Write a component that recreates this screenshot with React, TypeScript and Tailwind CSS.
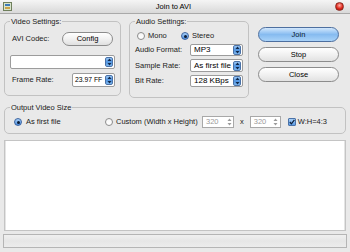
import React from "react";

function Stepper({ blue = true }: { blue?: boolean }) {
  return (
    <div
      className={
        blue
          ? "w-[8px] h-[10px] shrink-0 rounded-[2px] bg-gradient-to-b from-[#9cc8f4] via-[#4f93e0] to-[#7db6ee] border border-[#4a72a8] flex items-center justify-center"
          : "w-[8px] h-[10px] shrink-0 flex items-center justify-center"
      }
    >
      <svg width="5" height="8" viewBox="0 0 5 8">
        <path d="M2.5 0.5 L4.5 3 L0.5 3 Z" fill={blue ? "#10284a" : "#9a9a9a"} />
        <path d="M2.5 7.5 L4.5 5 L0.5 5 Z" fill={blue ? "#10284a" : "#9a9a9a"} />
      </svg>
    </div>
  );
}

function Select({ text, className, textClass = "text-[8px] pl-[3px]" }: { text: string; className: string; textClass?: string }) {
  return (
    <div className={"flex items-center bg-white border border-[#9c9c9c] rounded-[2px] pr-[1px] " + className}>
      <span className={"flex-1 overflow-hidden whitespace-nowrap leading-[10px] text-black " + textClass}>{text}</span>
      <Stepper />
    </div>
  );
}

function Radio({ on }: { on?: boolean }) {
  return on ? (
    <div className="w-[8px] h-[8px] rounded-full border border-[#3c64a0] bg-gradient-to-b from-[#a8d0f8] to-[#4c8fe0] flex items-center justify-center">
      <div className="w-[3px] h-[3px] rounded-full bg-[#0c1c34]" />
    </div>
  ) : (
    <div className="w-[8px] h-[8px] rounded-full border border-[#8c8c8c] bg-gradient-to-b from-[#f6f6f6] to-white" />
  );
}

function Btn({ label, primary }: { label: string; primary?: boolean }) {
  return (
    <div
      className={
        primary
          ? "h-[15px] rounded-full border border-[#4d6f9f] bg-gradient-to-b from-[#d2e7fc] via-[#86bbf0] to-[#a9d2f8] flex items-center justify-center text-[7.5px] text-[#0a1a30]"
          : "h-[15px] rounded-full border border-[#8c8c8c] bg-gradient-to-b from-white via-[#f1f1f1] to-[#e2e2e2] flex items-center justify-center text-[7.5px] text-black"
      }
    >
      {label}
    </div>
  );
}

export default function App() {
  return (
    <div className="w-[350px] h-[252px] overflow-hidden bg-[#e9e9e9] font-['Liberation_Sans',Arial,sans-serif] text-[7.5px] text-[#1a1a1a] flex flex-col">
      {/* title bar */}
      <div className="h-[14px] shrink-0 flex items-center px-[3px] bg-gradient-to-b from-[#f5f5f5] to-[#d9d9d9] border-b border-[#a9a9a9]">
        <svg width="9" height="9" viewBox="0 0 9 9">
          <rect x="0.5" y="0.5" width="8" height="8" fill="#d8e4cc" stroke="#6f7f5c" />
          <rect x="2" y="2" width="5" height="2" fill="#3d7ab8" />
          <rect x="2" y="5" width="5" height="2" fill="#c9a34a" />
        </svg>
        <div className="flex-1 text-center text-[7.5px] leading-[10px] text-black">Join to AVI</div>
        <div className="w-[9px] h-[9px] rounded-full bg-[radial-gradient(circle_at_50%_35%,#ffb0a8,#e0281c_55%,#9c1008)] border border-[#8a2a22] mr-[3px]" />
      </div>

      {/* top row */}
      <div className="flex px-[4px] pt-[3px] shrink-0">
        <fieldset className="w-[117px] h-[79px] border border-[#c2c2c2] rounded-[5px] px-[5px]">
          <legend className="px-[1px] leading-[9px]">Video Settings:</legend>
          <div className="flex items-center justify-between pl-[2px] pr-[2px] mt-[6px]">
            <span>AVI Codec:</span>
            <div className="w-[51px] h-[14px] rounded-full border border-[#8c8c8c] bg-gradient-to-b from-white via-[#f1f1f1] to-[#e0e0e0] flex items-center justify-center text-black">
              Config
            </div>
          </div>
          <Select text="" className="h-[14px] mt-[9px]" />
          <div className="flex items-center justify-between pl-[2px] mt-[4px]">
            <span>Frame Rate:</span>
            <Select text="23.97 FF" className="w-[43px] h-[14px]" textClass="text-[6.8px] pl-[2px]" />
          </div>
        </fieldset>

        <fieldset className="ml-[8px] w-[120px] h-[81px] border border-[#c2c2c2] rounded-[5px] px-[5px]">
          <legend className="px-[1px] leading-[9px]">Audio Settings:</legend>
          <div className="flex items-center mt-[5px] h-[10px] pl-[2px]">
            <Radio />
            <span className="ml-[3px] w-[33px]">Mono</span>
            <Radio on />
            <span className="ml-[3px]">Stereo</span>
          </div>
          <div className="flex flex-col gap-[3px] mt-[3px]">
            <div className="flex items-center justify-between">
              <span>Audio Format:</span>
              <Select text="MP3" className="w-[53px] h-[12px]" />
            </div>
            <div className="flex items-center justify-between">
              <span>Sample Rate:</span>
              <Select text="As first file" className="w-[53px] h-[13px]" />
            </div>
            <div className="flex items-center justify-between">
              <span>Bit Rate:</span>
              <Select text="128 KBps" className="w-[53px] h-[12px]" />
            </div>
          </div>
        </fieldset>

        <div className="ml-[9px] w-[81px] mt-[10px] flex flex-col gap-[5px]">
          <Btn label="Join" primary />
          <Btn label="Stop" />
          <Btn label="Close" />
        </div>
      </div>

      {/* output size */}
      <fieldset className="mx-[4px] mt-[5px] h-[31px] shrink-0 border border-[#c2c2c2] rounded-[5px] px-[5px]">
        <legend className="px-[1px] leading-[9px]">Output Video Size</legend>
        <div className="flex items-center h-[14px] mt-[3px] pl-[4px]">
          <Radio on />
          <span className="ml-[4px] w-[79px]">As first file</span>
          <Radio />
          <span className="ml-[3px] w-[86px]">Custom (Width x Height)</span>
          <div className="w-[32px] h-[12px] bg-white border border-[#a8a8a8] flex items-center pl-[3px] text-[#9a9a9a]">
            <span className="flex-1">320</span>
            <Stepper blue={false} />
          </div>
          <span className="mx-[6px]">x</span>
          <div className="w-[31px] h-[12px] bg-white border border-[#a8a8a8] flex items-center pl-[3px] text-[#9a9a9a]">
            <span className="flex-1">320</span>
            <Stepper blue={false} />
          </div>
          <div className="ml-[7px] w-[8px] h-[8px] rounded-[1px] border border-[#4a72a8] bg-gradient-to-b from-[#a8d0f8] to-[#5a9ae4] flex items-center justify-center">
            <svg width="6" height="6" viewBox="0 0 6 6">
              <path d="M0.8 3 L2.4 4.8 L5.4 0.8" fill="none" stroke="#0c1c34" strokeWidth="1.2" />
            </svg>
          </div>
          <span className="ml-[2px]">W:H=4:3</span>
        </div>
      </fieldset>

      {/* list area */}
      <div className="mx-[4px] mt-[6px] h-[91px] shrink-0 bg-white border border-[#c4c4c4] shadow-[inset_1px_0_0_#e4e4e4,inset_-1px_0_0_#e4e4e4]" />

      {/* status bar */}
      <div className="mx-[3px] mt-[3px] h-[14px] shrink-0 border border-[#b5b5b5] bg-gradient-to-b from-[#f0f0f0] via-[#e6e6e6] to-[#ececec]" />
    </div>
  );
}
